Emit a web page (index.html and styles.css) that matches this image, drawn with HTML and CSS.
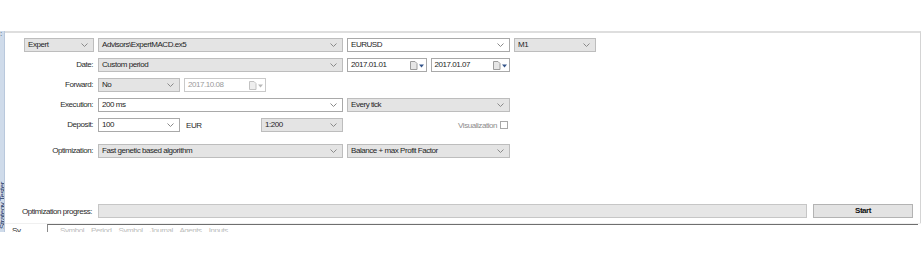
FILE: index.html
```html
<!DOCTYPE html>
<html>
<head>
<meta charset="utf-8">
<link rel="stylesheet" href="styles.css">
</head>
<body>
<div class="screen">
  <div class="top-space"></div>
  <div class="main">
    <div class="side"><span class="side-dots">:</span><span class="side-text">Strategy Tester</span></div>
    <div class="content">
      <div class="panel">
        <div class="rows">
          <div class="row">
            <div class="combo gray"><span class="val">Expert</span><svg class="chev" width="7" height="4" viewBox="0 0 7 4"><path d="M0.5 0.5 L3.5 3.5 L6.5 0.5" fill="none" stroke="#8a8a8a"/></svg></div>
            <div class="combo gray"><span class="val">Advisors\ExpertMACD.ex5</span><svg class="chev" width="7" height="4" viewBox="0 0 7 4"><path d="M0.5 0.5 L3.5 3.5 L6.5 0.5" fill="none" stroke="#8a8a8a"/></svg></div>
            <div class="combo white"><span class="val">EURUSD</span><svg class="chev" width="7" height="4" viewBox="0 0 7 4"><path d="M0.5 0.5 L3.5 3.5 L6.5 0.5" fill="none" stroke="#8a8a8a"/></svg></div>
            <div class="combo gray"><span class="val">M1</span><svg class="chev" width="7" height="4" viewBox="0 0 7 4"><path d="M0.5 0.5 L3.5 3.5 L6.5 0.5" fill="none" stroke="#8a8a8a"/></svg></div>
          </div>
          <div class="row">
            <div class="label">Date:</div>
            <div class="combo gray"><span class="val">Custom period</span><svg class="chev" width="7" height="4" viewBox="0 0 7 4"><path d="M0.5 0.5 L3.5 3.5 L6.5 0.5" fill="none" stroke="#8a8a8a"/></svg></div>
            <div class="pair">
              <div class="picker"><span class="val">2017.01.01</span><svg class="cal" width="15" height="9" viewBox="0 0 15 9"><path d="M0.5 0.5h4.5l2 2v6h-6.5z" fill="#e6e6e6" stroke="#9c9c9c"/><path d="M9 3.5h5l-2.5 3z" fill="#34558a"/></svg></div>
              <div class="picker"><span class="val">2017.01.07</span><svg class="cal" width="15" height="9" viewBox="0 0 15 9"><path d="M0.5 0.5h4.5l2 2v6h-6.5z" fill="#e6e6e6" stroke="#9c9c9c"/><path d="M9 3.5h5l-2.5 3z" fill="#34558a"/></svg></div>
            </div>
          </div>
          <div class="row">
            <div class="label">Forward:</div>
            <div class="split">
              <div class="combo gray small"><span class="val">No</span><svg class="chev" width="7" height="4" viewBox="0 0 7 4"><path d="M0.5 0.5 L3.5 3.5 L6.5 0.5" fill="none" stroke="#8a8a8a"/></svg></div>
              <div class="picker disabled small"><span class="val">2017.10.08</span><svg class="cal" width="15" height="9" viewBox="0 0 15 9"><path d="M0.5 0.5h4.5l2 2v6h-6.5z" fill="#eeeeee" stroke="#c2c2c2"/><path d="M9 3.5h5l-2.5 3z" fill="#b8b8b8"/></svg></div>
            </div>
          </div>
          <div class="row">
            <div class="label">Execution:</div>
            <div class="combo white"><span class="val">200 ms</span><svg class="chev" width="7" height="4" viewBox="0 0 7 4"><path d="M0.5 0.5 L3.5 3.5 L6.5 0.5" fill="none" stroke="#8a8a8a"/></svg></div>
            <div class="combo gray"><span class="val">Every tick</span><svg class="chev" width="7" height="4" viewBox="0 0 7 4"><path d="M0.5 0.5 L3.5 3.5 L6.5 0.5" fill="none" stroke="#8a8a8a"/></svg></div>
          </div>
          <div class="row">
            <div class="label">Deposit:</div>
            <div class="split">
              <div class="combo white small"><span class="val">100</span><svg class="chev" width="7" height="4" viewBox="0 0 7 4"><path d="M0.5 0.5 L3.5 3.5 L6.5 0.5" fill="none" stroke="#8a8a8a"/></svg></div>
              <span class="unit">EUR</span>
              <span class="spacer"></span>
              <div class="combo gray small"><span class="val">1:200</span><svg class="chev" width="7" height="4" viewBox="0 0 7 4"><path d="M0.5 0.5 L3.5 3.5 L6.5 0.5" fill="none" stroke="#8a8a8a"/></svg></div>
            </div>
            <div class="visual"><span>Visualization</span><span class="check"></span></div>
          </div>
          <div class="row sep">
            <div class="label">Optimization:</div>
            <div class="combo gray"><span class="val">Fast genetic based algorithm</span><svg class="chev" width="7" height="4" viewBox="0 0 7 4"><path d="M0.5 0.5 L3.5 3.5 L6.5 0.5" fill="none" stroke="#8a8a8a"/></svg></div>
            <div class="combo gray"><span class="val">Balance + max Profit Factor</span><svg class="chev" width="7" height="4" viewBox="0 0 7 4"><path d="M0.5 0.5 L3.5 3.5 L6.5 0.5" fill="none" stroke="#8a8a8a"/></svg></div>
          </div>
        </div>
        <div class="progress-row">
          <span class="plabel">Optimization progress:</span>
          <div class="bar"></div>
          <div class="start">Start</div>
        </div>
      </div>
      <div class="bottom">
        <span class="bsym">Sy</span>
        <div class="tabs">Symbol &nbsp;&nbsp; Period &nbsp;&nbsp; Symbol &nbsp;&nbsp; Journal &nbsp;&nbsp; Agents &nbsp;&nbsp; Inputs</div>
      </div>
    </div>
  </div>
</div>
</body>
</html>
```

FILE: styles.css
```css
* { box-sizing: border-box; }
html, body { margin: 0; padding: 0; background: #ffffff; }
body {
  width: 923px;
  height: 258px;
  overflow: hidden;
  font-family: "Liberation Sans", Arial, sans-serif;
  font-size: 8px;
  letter-spacing: -0.45px;
  color: #1e1e1e;
}
.screen { width: 923px; }
.top-space { height: 31px; }
.main { display: flex; height: 201px; }
.side {
  width: 5px;
  background: #cfdbea;
  border-right: 1px solid #b9c8dc;
  overflow: hidden;
  display: flex;
  flex-direction: column;
  justify-content: space-between;
  align-items: flex-start;
}
.side-dots { color: #4d5a6a; font-size: 8px; line-height: 6px; margin-left: 0; }
.side-text {
  writing-mode: vertical-rl;
  transform: rotate(180deg);
  color: #1d3a6b;
  font-size: 8px;
  line-height: 6px;
  margin-bottom: 3px;
  white-space: nowrap;
}
.content { width: 916px; display: flex; flex-direction: column; }
.panel {
  border-top: 2px solid #dedede;
  border-right: 1px solid #d4d4d4;
  padding: 5px 7px 5px 19px;
  height: 192px;
  display: flex;
  flex-direction: column;
}
.rows { display: flex; flex-direction: column; gap: 6px; }
.row {
  display: grid;
  grid-template-columns: 70px 245px 163px 82px;
  column-gap: 4px;
  height: 14px;
}
.row.sep { margin-top: 6px; }
.label {
  grid-column: 1;
  text-align: right;
  line-height: 14px;
  color: #2a2a2a;
  padding-right: 1px;
}
.combo, .picker {
  height: 14px;
  display: flex;
  align-items: center;
  justify-content: space-between;
  padding: 0 5px 0 3px;
  white-space: nowrap;
}
.combo.gray { background: #e4e4e4; border: 1px solid #bdbdbd; }
.combo.white { background: #ffffff; border: 1px solid #a9a9a9; }
.picker { background: #ffffff; border: 1px solid #a9a9a9; padding-right: 1px; }
.picker.disabled { border-color: #c9c9c9; color: #9a9a9a; }
.val { line-height: 12px; }
.chev { flex: none; }
.cal { flex: none; }
.pair { display: flex; gap: 4px; }
.pair .picker { flex: 1; }
.split { display: flex; align-items: center; gap: 4px; }
.small { width: 82px; flex: none; }
.unit { margin-left: 2px; color: #2a2a2a; }
.spacer { flex: 1; }
.visual {
  display: flex;
  align-items: center;
  justify-content: flex-end;
  gap: 3px;
  color: #8c8c8c;
  padding-right: 2px;
}
.check {
  width: 8px;
  height: 8px;
  border: 1px solid #a8a8a8;
  background: #fff;
}
.progress-row {
  margin-top: 46px;
  display: flex;
  align-items: center;
  height: 14px;
}
.plabel { width: 74px; flex: none; margin-left: -2px; color: #2a2a2a; white-space: nowrap; }
.bar {
  flex: 1;
  height: 14px;
  background: #e6e6e6;
  border: 1px solid #c6c6c6;
  margin-left: 2px;
}
.start {
  width: 100px;
  height: 14px;
  margin-left: 6px;
  background: #e3e3e3;
  border: 1px solid #b3b3b3;
  text-align: center;
  line-height: 12px;
  font-weight: bold;
  color: #111;
}
.bottom {
  height: 9px;
  display: flex;
  align-items: flex-start;
  overflow: hidden;
  border-top: 1px solid #f0f0f0;
}
.bsym { width: 42px; flex: none; padding-left: 7px; color: #333; line-height: 9px; padding-top: 2px; }
.tabs {
  width: 871px;
  height: 9px;
  border-top: 1px solid #6f6f6f;
  border-left: 1px solid #8a8a8a;
  color: #bdbdbd;
  padding-left: 12px;
  padding-top: 1px;
  line-height: 9px;
  white-space: nowrap;
  overflow: hidden;
}
```
